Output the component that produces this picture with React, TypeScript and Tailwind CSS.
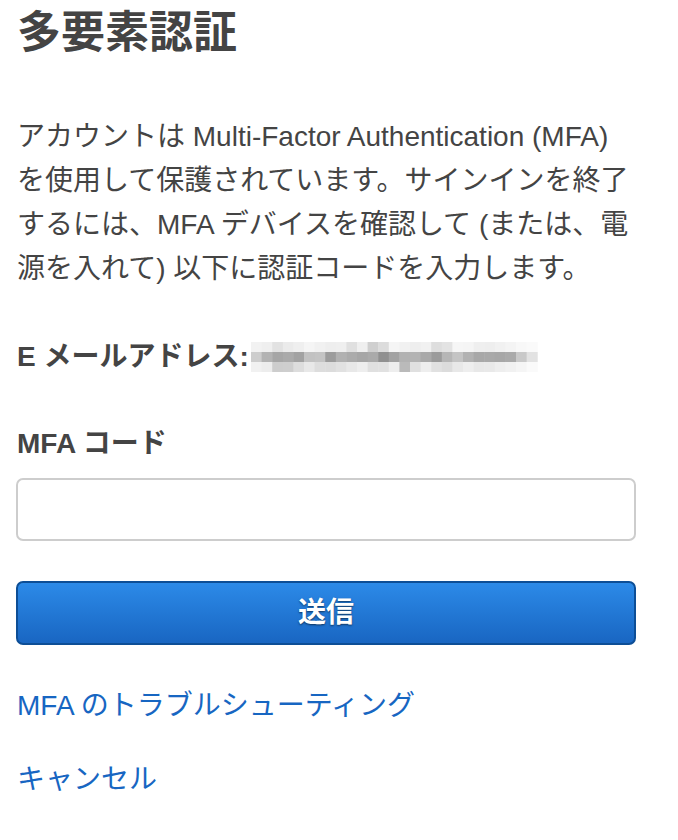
import React from "react";

const top = ["#f2f2f2","#efefef","#e2e2e2","#ebebeb","#efefef","#f5f5f5","#f1f1f1","#eeeeee","#efefef","#e0e0e0","#efefef","#cfcfcf","#dcdcdc","#f5f5f5","#f1f1f1","#eeeeee","#f1f1f1","#dedede","#e3e3e3","#f6f6f6","#f5f5f5","#efefef","#eeeeee","#f1f1f1","#f4f4f4","#f8f8f8","#fafafa"];
const mid = ["#cdcdcd","#b3b3b3","#a6a6a6","#aaaaaa","#a2a2a2","#c2c2c2","#c4c4c4","#9c9c9c","#b1b1b1","#ababab","#a6a6a6","#aaaaaa","#909090","#a2a2a2","#b2b2b2","#b3b3b3","#a9a9a9","#9b9b9b","#b6b6b6","#c4c4c4","#b2b2b2","#a8a8a8","#a9a9a9","#a7a7a7","#aaaaaa","#c9c9c9","#e2e2e2"];
const bot = ["#f1f1f1","#ededed","#cdcdcd","#cecece","#dddddd","#e8e8e8","#dddddd","#dcdcdc","#e1e1e1","#e8e8e8","#eeeeee","#e0e0e0","#e1e1e1","#eeeeee","#bababa","#e0e0e0","#eeeeee","#e1e1e1","#dcdcdc","#e8e8e8","#eeeeee","#e8e8e8","#e9e9e9","#eeeeee","#f1f1f1","#f5f5f5","#fafafa"];

function Blur() {
  const w = 10.6;
  return (
    <svg width="287" height="30" viewBox="0 0 287 30" className="block">
      {top.map((c, i) => (
        <rect key={"t" + i} x={i * w} y={0} width={w + 0.5} height={10} fill={c} />
      ))}
      {mid.map((c, i) => (
        <rect key={"m" + i} x={i * w} y={10} width={w + 0.5} height={10} fill={c} />
      ))}
      {bot.map((c, i) => (
        <rect key={"b" + i} x={i * w} y={20} width={w + 0.5} height={10} fill={c} />
      ))}
    </svg>
  );
}

export default function App() {
  return (
    <div
      className="w-[678px] h-[840px] bg-white text-[#444] overflow-hidden"
      style={{ fontFamily: '"Liberation Sans", "Noto Sans CJK JP", sans-serif' }}
    >
      <div className="w-[620px] ml-[16px] flex flex-col">
        <h1 className="mt-[3px] text-[44px] leading-[60px] font-bold text-[#444] pl-[1px]">多要素認証</h1>
        <p className="mt-[52px] text-[28px] leading-[44px] pl-[1px]">
          アカウントは Multi-Factor Authentication (MFA) を使用して保護されています。サインインを終了するには、MFA デバイスを確認して (または、電源を入れて) 以下に認証コードを入力します。
        </p>
        <div className="mt-[44px] flex items-center h-[44px] pl-[1px]">
          <span className="text-[28px] leading-[44px] font-bold">E メールアドレス:</span>
          <span className="ml-[2px]">
            <Blur />
          </span>
        </div>
        <label className="mt-[43px] text-[28px] leading-[44px] font-bold pl-[1px]">MFA コード</label>
        <input
          type="text"
          className="mt-[12px] h-[63px] w-full rounded-[7px] border-2 border-[#cdcdcd] bg-white outline-none"
        />
        <button
          className="mt-[40px] h-[64px] w-full rounded-[7px] border-2 border-[#0d4e96] bg-gradient-to-b from-[#2c8ae8] to-[#1966c2] text-white text-[28px] font-bold [text-shadow:0_1px_2px_rgba(0,0,0,0.55)]"
        >
          送信
        </button>
        <a className="mt-[39px] text-[28px] leading-[44px] text-[#1766c2] pl-[1px]" href="#">
          MFA のトラブルシューティング
        </a>
        <a className="mt-[30px] text-[28px] leading-[44px] text-[#1766c2] pl-[1px]" href="#">
          キャンセル
        </a>
      </div>
    </div>
  );
}
